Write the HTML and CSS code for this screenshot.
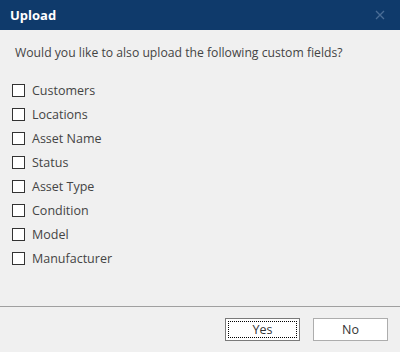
FILE: index.html
```html
<!doctype html>
<html>
<head>
	<title>Upload</title>
	<meta charset="utf-8" />
	<link rel="stylesheet" href="styles.css">
</head>
	<body>
		<div class="dialog">
			<div class="titlebar">
				<span class="title">Upload</span>
				<span class="close">
					<svg width="10" height="10" viewBox="0 0 10 10"><path d="M1 1L9 9M9 1L1 9" stroke="#4a6d96" stroke-width="1.3"/></svg>
				</span>
			</div>
			<div class="content">
				<p class="question">Would you like to also upload the following custom fields?</p>
				<ul class="fields">
					<li><span class="box"></span>Customers</li>
					<li><span class="box"></span>Locations</li>
					<li><span class="box"></span>Asset Name</li>
					<li><span class="box"></span>Status</li>
					<li><span class="box"></span>Asset Type</li>
					<li><span class="box"></span>Condition</li>
					<li><span class="box"></span>Model</li>
					<li><span class="box"></span>Manufacturer</li>
				</ul>
			</div>
			<div class="footer">
				<button class="btn default"><span>Yes</span></button>
				<button class="btn">No</button>
			</div>
		</div>
	</body>
</html>
```

FILE: styles.css
```css
html, body {
  margin: 0;
  height: 100%;
  overflow: hidden;
  background-color: #F0F0F0;
  font-family: "Open Sans", "Noto Sans", sans-serif;
  color: #444;
}
.dialog {
  display: flex;
  flex-direction: column;
  height: 352px;
}
.titlebar {
  height: 30px;
  background-color: #0F3A6B;
  display: flex;
  align-items: center;
  justify-content: space-between;
  padding: 0 15px 0 10px;
}
.title {
  color: #FFF;
  font-weight: bold;
  font-size: 13px;
}
.close {
  display: flex;
}
.content {
  flex: 1;
  padding: 0 15px;
}
.question {
  font-size: 12.2px;
  margin: 14px 0 17px 0;
}
.fields {
  list-style: none;
  margin: 0;
  padding: 0;
}
.fields li {
  display: flex;
  align-items: center;
  height: 24px;
  font-size: 12.5px;
}
.box {
  width: 11px;
  height: 11px;
  border: 1px solid #333;
  background-color: #FFF;
  margin: 0 7px 0 -3px;
}
.footer {
  border-top: 1px solid #A0A0A0;
  height: 46px;
  display: flex;
  justify-content: flex-end;
  align-items: flex-start;
  padding: 11px 12px 0 0;
  box-sizing: border-box;
  gap: 13px;
}
.btn {
  width: 75px;
  height: 23px;
  background-color: #FFF;
  border: 1px solid #ADADAD;
  font-family: "Open Sans", "Noto Sans", sans-serif;
  font-size: 12.5px;
  color: #333;
  padding: 0;
}
.btn.default {
  border-color: #7A7A7A;
  padding: 2px;
}
.btn.default span {
  display: flex;
  align-items: center;
  justify-content: center;
  height: 100%;
  border: 1px dotted #000;
  box-sizing: border-box;
}
```
